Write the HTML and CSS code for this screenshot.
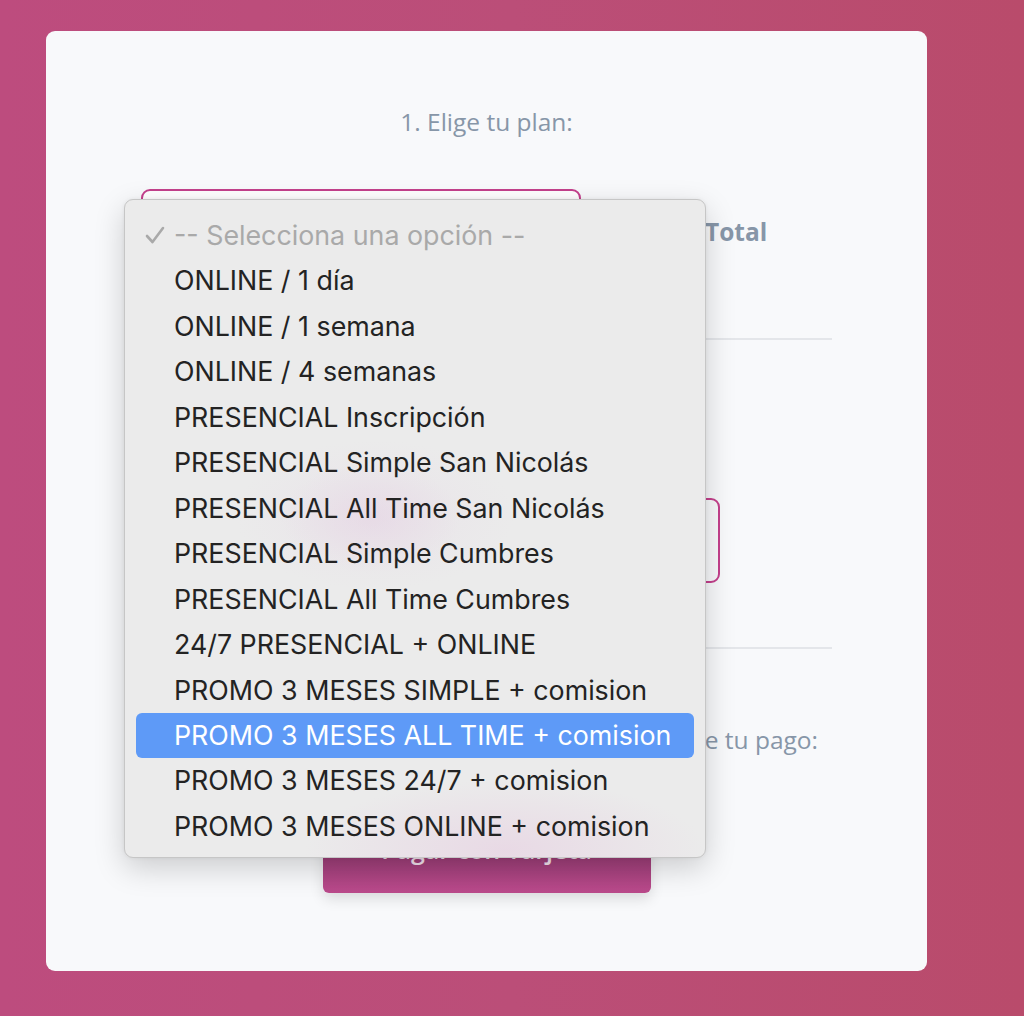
FILE: index.html
```html
<!DOCTYPE html>
<html lang="es">
<head>
<meta charset="utf-8">
<title>Elige tu plan</title>
<link rel="stylesheet" href="styles.css">
</head>
<body>
<div class="page">
  <main class="card">
    <p class="step-title">1. Elige tu plan:</p>
    <div class="plan-row">
      <div class="select-box"></div>
      <div class="total-col">Total</div>
    </div>
    <hr class="divider">
    <div class="code-row">
      <div class="code-box"></div>
    </div>
    <hr class="divider">
    <p class="step-pay">2. Elige la forma de tu pago:</p>
    <div class="pay-row">
      <button class="pay-btn">Pagar con Tarjeta</button>
    </div>
  </main>

  <div class="menu">
    <div class="opt placeholder"><svg class="check" width="20" height="18" viewBox="0 0 20 18"><path d="M2 10 L7.5 16 L18 2" fill="none" stroke="#a9a9a9" stroke-width="2.6" stroke-linecap="round" stroke-linejoin="round"/></svg>-- Selecciona una opción --</div>
    <div class="opt">ONLINE / 1 día</div>
    <div class="opt">ONLINE / 1 semana</div>
    <div class="opt">ONLINE / 4 semanas</div>
    <div class="opt">PRESENCIAL Inscripción</div>
    <div class="opt">PRESENCIAL Simple San Nicolás</div>
    <div class="opt">PRESENCIAL All Time San Nicolás</div>
    <div class="opt">PRESENCIAL Simple Cumbres</div>
    <div class="opt">PRESENCIAL All Time Cumbres</div>
    <div class="opt">24/7 PRESENCIAL + ONLINE</div>
    <div class="opt">PROMO 3 MESES SIMPLE + comision</div>
    <div class="opt selected">PROMO 3 MESES ALL TIME + comision</div>
    <div class="opt">PROMO 3 MESES 24/7 + comision</div>
    <div class="opt">PROMO 3 MESES ONLINE + comision</div>
  </div>
</div>
</body>
</html>
```

FILE: styles.css
```css
* { box-sizing: border-box; }
html, body { margin: 0; height: 100%; }
body {
  background: linear-gradient(90deg, #bd4c7e 0%, #bb4e78 50%, #b94b6b 100%);
  font-family: "Open Sans", "Noto Sans", sans-serif;
  overflow: hidden;
}
.page {
  position: relative;
  padding: 31px 0 0 46px;
  height: 1016px;
}
.card {
  width: 881px;
  height: 940px;
  background: #f8f9fb;
  border-radius: 9px;
  padding: 0 95px;
  display: flex;
  flex-direction: column;
}
.step-title {
  margin: 74px 0 0;
  text-align: center;
  color: #8796a8;
  font-size: 24.5px;
  line-height: 34px;
}
.plan-row {
  margin-top: 50px;
  display: flex;
  align-items: flex-start;
}
.select-box {
  width: 440px;
  height: 56px;
  border: 2px solid #c4408c;
  border-radius: 9px;
  background: #fff;
}
.total-col {
  margin: 26px 0 0 124px;
  color: #8796a8;
  font-weight: 700;
  font-size: 24.5px;
  line-height: 34px;
}
.divider {
  margin: 0;
  border: 0;
  border-top: 2px solid #e4e6ea;
}
.plan-row + .divider { margin-top: 89px; }
.code-row {
  display: flex;
  justify-content: flex-end;
  padding-right: 112px;
  margin-top: 158px;
}
.code-box {
  width: 460px;
  height: 85px;
  border: 2px solid #c4408c;
  border-radius: 9px;
}
.code-row + .divider { margin-top: 64px; }
.step-pay {
  margin: 74px 0 0;
  text-align: right;
  padding-right: 14px;
  color: #8796a8;
  font-size: 24.5px;
  line-height: 34px;
}
.pay-row {
  display: flex;
  justify-content: center;
  margin-top: 48px;
}
.pay-btn {
  width: 328px;
  height: 88px;
  border: 0;
  border-radius: 6px;
  background: linear-gradient(180deg, #a8427f 0%, #9d3e78 60%, #bb4a8c 100%);
  color: #f3e3ee;
  font-family: "Open Sans", sans-serif;
  font-weight: 600;
  font-size: 25px;
  box-shadow: 0 6px 14px rgba(0,0,0,0.12);
}

/* Native-style dropdown overlay */
.menu {
  position: absolute;
  left: 124px;
  top: 199px;
  width: 582px;
  height: 659px;
  padding: 13px 11px 9px;
  background:
    radial-gradient(ellipse 90px 55px at 246px 318px, rgba(230,212,228,0.55), rgba(235,235,235,0) 100%),
    radial-gradient(ellipse 140px 75px at 250px 315px, rgba(232,222,232,0.6), rgba(235,235,235,0) 100%),
    radial-gradient(ellipse 200px 70px at 380px 650px, rgba(232,214,228,0.85), rgba(235,235,235,0) 100%),
    #ebebeb;
  border: 1px solid #c6c6c6;
  border-radius: 9px;
  box-shadow: 0 10px 30px rgba(0,0,0,0.18), 0 0 4px rgba(0,0,0,0.06);
  font-family: Inter, "Liberation Sans", sans-serif;
}
.opt {
  position: relative;
  height: 45.46px;
  line-height: 45.46px;
  padding-left: 38px;
  font-size: 26.8px;
  color: #232323;
  border-radius: 6px;
  white-space: nowrap;
}
.opt.placeholder { color: #a9a9a9; }
.check {
  position: absolute;
  left: 9px;
  top: 13px;
}
.opt.selected {
  background: #5e9af7;
  color: #ffffff;
}
```
